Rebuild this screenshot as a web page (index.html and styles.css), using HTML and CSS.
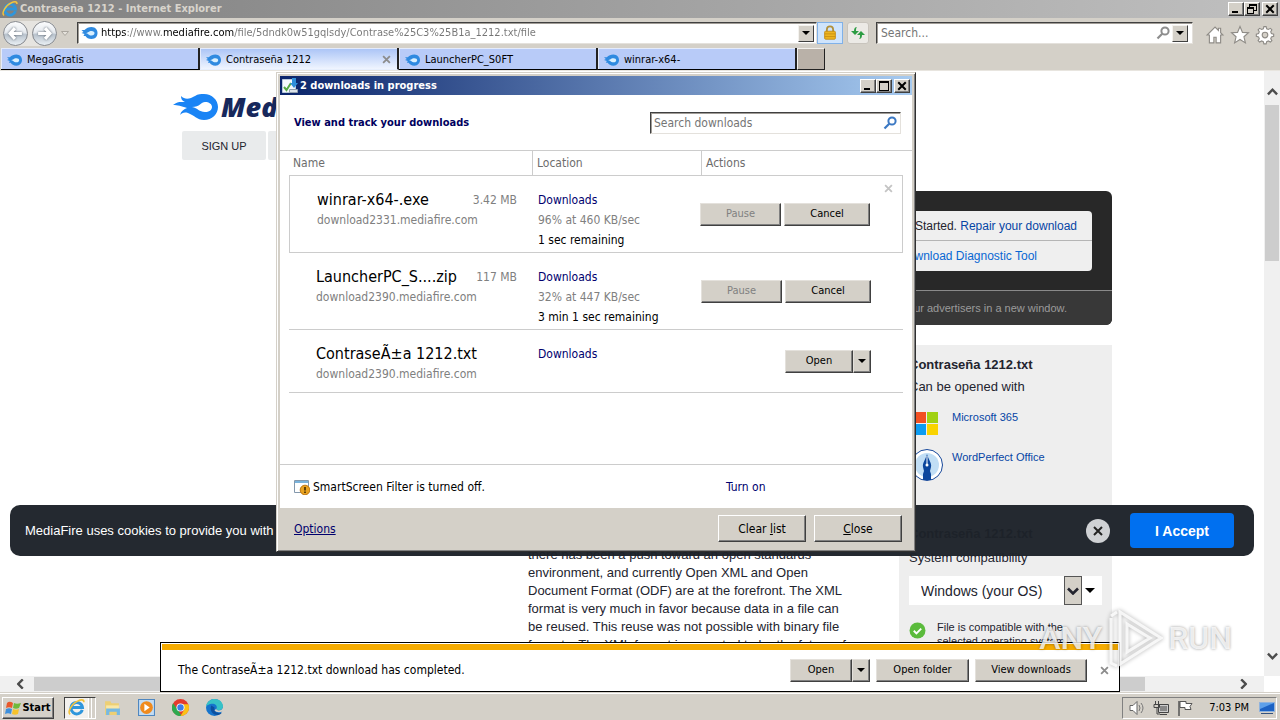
FILE: index.html
```html
<!DOCTYPE html>
<html lang="en">
<head>
<meta charset="utf-8">
<title>Contraseña 1212 - Internet Explorer</title>
<link rel="stylesheet" href="styles.css">
</head>
<body>
<svg class="defs" aria-hidden="true">
  <symbol id="flame" viewBox="0 0 46 26">
    <path fill="#1a84f5" fill-rule="evenodd" d="M0 11C5 7 8 8 12 8C9 7 8 5 8 2C12 6 17 5 22 2C25 0 28 0 31 0C39 0 45 6 45 13C45 20 39 26 31 26C24 26 21 21 15 19C11 18 9 19 7 21C8 17 11 15 14 14C8 12 5 11 0 11ZM19 13C25 14 26 18 32 18C36 18 39 16 39 13C39 10 36 8 32 8C28 8 27 13 19 13Z"/>
  </symbol>
  <symbol id="favicon" viewBox="0 0 16 12">
    <path fill="#2f8ae0" d="M0 3h3C5 1 7 0 10 0c4 0 6 3 6 6s-2 6-6 6c-3 0-5-1-6-3H2l1-2-3-1 2-1z"/>
    <path fill="#d9f0ff" d="M4 6c3 0 3-2 6-2 2 0 3 1 3 2.200S12 8.500 10 8.500C7 8.500 7 6.500 4 6z"/>
  </symbol>
  <symbol id="ie" viewBox="0 0 16 16">
    <path d="M13.4 10.2A5.4 5.4 0 1 1 13.6 8H4" fill="none" stroke="#2f96dc" stroke-width="2.8"/>
    <path d="M2 14.500C-1 12 4 4 9 2C12 .500 15 0 15 3" fill="none" stroke="#f3c33c" stroke-width="1.500"/>
  </symbol>
  <symbol id="arrow" viewBox="0 0 8 4"><path d="M0 0h8L4 4z"/></symbol>
  <symbol id="cross" viewBox="0 0 8 8"><path d="M1 1l6 6M7 1L1 7" fill="none" stroke="currentColor" stroke-width="1.600"/></symbol>
  <symbol id="lens" viewBox="0 0 14 14"><circle cx="9" cy="5" r="3.600" fill="none" stroke="currentColor" stroke-width="2"/><path d="M6.200 7.800L1.500 12.500" stroke="currentColor" stroke-width="2.200"/></symbol>
  <symbol id="chev" viewBox="0 0 12 8"><path d="M1 1.500l5 5 5-5" fill="none" stroke="currentColor" stroke-width="2.600"/></symbol>
  <symbol id="min" viewBox="0 0 10 10"><path d="M1 7h6v2H1z"/></symbol>
  <symbol id="max" viewBox="0 0 10 10"><path d="M0 0h10v10H0zM1 2v7h8V2z" fill-rule="evenodd"/></symbol>
  <symbol id="restore" viewBox="0 0 10 10"><path fill-rule="evenodd" d="M2 0h8v7H7v3H0V3h2zM3 2v1h4v3h2V2zM1 5v4h5V5z"/></symbol>
</svg>

<header class="titlebar">
  <svg class="i16"><use href="#ie"/></svg>
  <h1 class="titlebar-text">Contraseña 1212 - Internet Explorer</h1>
  <div class="winbtns">
    <button class="winbtn" aria-label="Minimize"><svg><use href="#min"/></svg></button>
    <button class="winbtn" aria-label="Restore"><svg><use href="#restore"/></svg></button>
    <button class="winbtn winbtn-close" aria-label="Close window"><svg><use href="#cross"/></svg></button>
  </div>
</header>

<div class="navbar">
  <div class="history">
    <button class="round" aria-label="Back"><svg viewBox="0 0 14 12"><path d="M6.500 1L2 6l4.500 5M2 6h11"/></svg></button>
    <button class="round" aria-label="Forward"><svg viewBox="0 0 14 12"><path d="M7.500 1L12 6l-4.500 5M12 6H1"/></svg></button>
  </div>
  <button class="recent" aria-label="Recent pages"><svg viewBox="0 0 8 5"><path d="M.500.500h7L4 4.500z"/></svg></button>
  <div class="address sunken">
    <svg class="favicon"><use href="#favicon"/></svg>
    <input class="address-input" aria-label="Address" value="https://www.mediafire.com/file/5dndk0w51gqlsdy/Contrase%25C3%25B1a_1212.txt/file">
    <button class="combo" aria-label="Show addresses"><svg><use href="#arrow"/></svg></button>
  </div>
  <button class="tool tool-lock" aria-label="Security report"><svg viewBox="0 0 14 18"><path d="M3.500 9V5a3.500 3.500 0 0 1 7 0v4" fill="none" stroke="#b1903b" stroke-width="2"/><rect x="1" y="7" width="12" height="9" rx="1" fill="#eeb51f" stroke="#c28a12"/><path d="M1 10h12M1 13h12" stroke="#c98f12"/></svg></button>
  <button class="tool" aria-label="Refresh"><svg viewBox="0 0 14 14"><path fill="#2c9c43" d="M6 1C4 1 3 2.500 3 5H0l4 4 4-4H5C5 3 5 2 6 1zM8 13c2 0 3-1.500 3-4h3l-4-4-4 4h3c0 2 0 3-1 4z"/></svg></button>
  <div class="search sunken">
    <input class="search-input" aria-label="Search" placeholder="Search...">
    <svg class="lens lens-grey"><use href="#lens"/></svg>
    <button class="combo" aria-label="Search options"><svg><use href="#arrow"/></svg></button>
  </div>
  <div class="navicons">
    <button class="navicon" aria-label="Home"><svg viewBox="0 0 16 16"><path d="M8 1L1 8h2v7h4v-5h2v5h4V8h2l-2-2V2h-2v2z"/></svg></button>
    <button class="navicon" aria-label="Favorites"><svg viewBox="0 0 16 16"><path d="M8 .500l2.200 5.200 5.300.300-4 3.600 1.300 5.400L8 12l-4.800 3 1.300-5.400-4-3.600 5.300-.300z"/></svg></button>
    <button class="navicon" aria-label="Tools"><svg viewBox="0 0 16 16"><path fill-rule="evenodd" d="M7 .500h2l.500 2 1.500.600 1.800-1 1.300 1.300-1 1.800.600 1.500 2 .500v2l-2 .500-.600 1.500 1 1.800-1.300 1.300-1.800-1-1.500.600-.500 2H7l-.500-2-1.500-.600-1.800 1-1.300-1.300 1-1.800-.600-1.500-2-.500v-2l2-.500.600-1.500-1-1.800 1.300-1.300 1.800 1 1.500-.600zM8 5.500a2.500 2.500 0 1 0 0 5 2.500 2.500 0 0 0 0-5z"/></svg></button>
  </div>
</div>

<nav class="tabs" aria-label="Tabs">
  <a class="tab" href="#"><svg class="favicon"><use href="#favicon"/></svg>MegaGratis</a>
  <div class="tab tab-active"><svg class="favicon"><use href="#favicon"/></svg><a class="tab-link" href="#">Contraseña 1212</a><button class="x" aria-label="Close tab"><svg><use href="#cross"/></svg></button></div>
  <a class="tab" href="#"><svg class="favicon"><use href="#favicon"/></svg>LauncherPC_S0FT</a>
  <a class="tab" href="#"><svg class="favicon"><use href="#favicon"/></svg>winrar-x64-</a>
  <button class="newtab" aria-label="New tab"></button>
</nav>

<main class="view">
  <div class="page">
    <div class="site-head">
      <a class="logo" href="#" aria-label="MediaFire"><svg class="logo-mark"><use href="#flame"/></svg><span>MediaFire</span></a>
      <div class="site-nav"><a href="#">SIGN UP</a><a href="#">LOG IN</a></div>
    </div>
    <section class="promo">
      <div class="promo-list">
        <p>Download not Started. <a href="#">Repair your download</a></p>
        <p><a class="bright" href="#">Use the Download Diagnostic Tool</a></p>
      </div>
      <p class="promo-note">Downloads open our advertisers in a new window.</p>
    </section>
    <div class="columns">
      <p class="article">there has been a push toward an open standards environment, and currently Open XML and Open Document Format (ODF) are at the forefront. The XML format is very much in favor because data in a file can be reused. This reuse was not possible with binary file formats. The XML format is expected to be the future of</p>
      <aside class="side">
        <h2>Contraseña 1212.txt</h2>
        <p class="sub">Can be opened with</p>
        <ul class="apps">
          <li><svg class="app-ms" viewBox="0 0 24 24"><path fill="#f25022" d="M0 0h11v11H0z"/><path fill="#a1d113" d="M12 0h11v11H12z"/><path fill="#0c9cf2" d="M0 12h11v11H0z"/><path fill="#f9d300" d="M12 12h11v11H12z"/></svg><a href="#">Microsoft 365</a></li>
          <li><svg class="app-wp" viewBox="0 0 32 32"><circle cx="16" cy="16" r="15.500" fill="#fff" stroke="#17489a"/><circle cx="16" cy="16" r="12" fill="#c1def5"/><path fill="#0b469d" d="M16 5c1 5 5 9 4 13l-1 4 1 3v6h-8v-6l1-3-1-4c-1-4 3-8 4-13z"/><path d="M16 7v8" stroke="#fff"/><circle cx="16" cy="16" r="1.500" fill="#fff"/></svg><a href="#">WordPerfect Office</a></li>
        </ul>
        <h2>Contraseña 1212.txt</h2>
        <label class="sub" for="os">System compatibility</label>
        <div class="os">
          <select id="os"><option>Windows (your OS)</option></select>
          <span class="os-arrow"><svg><use href="#chev"/></svg></span>
          <svg class="os-caret"><use href="#arrow"/></svg>
        </div>
        <p class="compat"><svg viewBox="0 0 16 16"><circle cx="8" cy="8" r="7.500" fill="#5bbb3c"/><path d="M4.500 8.200l2.500 2.500 4.500-4.500" fill="none" stroke="#fff" stroke-width="1.800"/></svg><span>File is compatible with the selected operating system.</span></p>
      </aside>
    </div>
  </div>
  <div class="vscroll"><svg class="up"><use href="#chev"/></svg><div class="vthumb"></div><svg class="down"><use href="#chev"/></svg></div>
  <div class="hscroll"><svg class="left"><use href="#chev"/></svg><div class="hthumb"></div><svg class="right"><use href="#chev"/></svg></div>
  <div class="cookie">
    <p>MediaFire uses cookies to provide you with</p>
    <button class="cookie-x" aria-label="Dismiss"><svg viewBox="0 0 10 10"><path d="M1 1l8 8M9 1L1 9"/></svg></button>
    <button class="accept">I Accept</button>
  </div>
</main>

<section class="dialog" aria-label="Downloads">
  <header class="dlg-title">
    <svg class="i16" viewBox="0 0 16 16"><path fill="#f5f9fd" stroke="#b9c9dc" d="M.500 1.500h13v13H.500z"/><path d="M2 9l2.500 3L9 5" fill="none" stroke="#58ab46" stroke-width="2"/><path fill="#2f8fda" d="M10 0h4v5h2l-4 5-4-5h2z"/><path fill="#dce3ea" stroke="#93a1b0" d="M7.500 11.500h8v3h-8z"/></svg>
    <h2 class="titlebar-text">2 downloads in progress</h2>
    <div class="winbtns">
      <button class="winbtn" aria-label="Minimize"><svg><use href="#min"/></svg></button>
      <button class="winbtn" aria-label="Maximize"><svg><use href="#max"/></svg></button>
      <button class="winbtn winbtn-close" aria-label="Close downloads"><svg><use href="#cross"/></svg></button>
    </div>
  </header>
  <div class="dlg-body">
    <div class="dlg-head">
      <h3>View and track your downloads</h3>
      <div class="dlg-search sunken"><input aria-label="Search downloads" placeholder="Search downloads"><svg class="lens lens-blue"><use href="#lens"/></svg></div>
    </div>
    <table class="list">
      <thead><tr><th class="c-name">Name</th><th class="c-loc">Location</th><th>Actions</th></tr></thead>
      <tbody>
        <tr class="selected">
          <td class="name"><div class="file"><strong>winrar-x64-.exe</strong><span>3.42 MB</span></div><div class="grey">download2331.mediafire.com</div></td>
          <td class="loc"><a href="#">Downloads</a><div class="grey">96% at 460 KB/sec</div><div>1 sec remaining</div></td>
          <td class="act"><div class="acts"><button class="btn b-pause" disabled>Pause</button><button class="btn b-cancel">Cancel</button></div><button class="x row-x" aria-label="Remove"><svg><use href="#cross"/></svg></button></td>
        </tr>
        <tr>
          <td class="name"><div class="file"><strong>LauncherPC_S....zip</strong><span>117 MB</span></div><div class="grey">download2390.mediafire.com</div></td>
          <td class="loc"><a href="#">Downloads</a><div class="grey">32% at 447 KB/sec</div><div>3 min 1 sec remaining</div></td>
          <td class="act"><div class="acts"><button class="btn b-pause" disabled>Pause</button><button class="btn b-cancel">Cancel</button></div></td>
        </tr>
        <tr class="short">
          <td class="name"><div class="file"><strong>ContraseÃ±a 1212.txt</strong></div><div class="grey">download2390.mediafire.com</div></td>
          <td class="loc"><a href="#">Downloads</a></td>
          <td class="act"><div class="acts"><div class="split"><button class="btn b-open">Open</button><button class="btn b-drop" aria-label="Open options"><svg><use href="#arrow"/></svg></button></div></div></td>
        </tr>
      </tbody>
    </table>
    <div class="smart">
      <p><svg class="i16" viewBox="0 0 16 16"><path fill="#fff" stroke="#8498ac" d="M.500 1.500h14v12H.500z"/><path stroke="#79b3dc" stroke-width="2" d="M1 3h13"/><circle cx="11" cy="11" r="4.800" fill="#e9a321" stroke="#bd7610"/><path d="M11 8v3.500M11 12.500v1.500" stroke="#402800" stroke-width="1.600"/></svg>SmartScreen Filter is turned off.</p>
      <a href="#">Turn on</a>
    </div>
  </div>
  <footer class="dlg-foot">
    <a href="#">Options</a>
    <button class="cbtn">Clear <u>l</u>ist</button>
    <button class="cbtn"><u>C</u>lose</button>
  </footer>
</section>

<section class="notice" aria-label="Download notification">
  <div class="notice-bar"></div>
  <div class="notice-row">
    <p>The ContraseÃ±a 1212.txt download has completed.</p>
    <div class="split"><button class="btn n-open">Open</button><button class="btn b-drop" aria-label="Open options"><svg><use href="#arrow"/></svg></button></div>
    <button class="btn n-folder">Open folder</button>
    <button class="btn n-view">View downloads</button>
    <button class="x" aria-label="Dismiss notification"><svg><use href="#cross"/></svg></button>
  </div>
</section>

<div class="watermark"><span>ANY</span><svg viewBox="0 0 56 60"><path d="M4 10v45l6 3M10 4L4 8M13 4v52l41-26zM20 16v28l23-14z"/></svg><span>RUN</span></div>

<footer class="taskbar">
  <button class="start"><svg viewBox="0 0 16 16"><path fill="#e8582b" d="M2 3c2-2 4-1 6 0L7 8C5 7 3 7 1 8z"/><path fill="#6fb93a" d="M9 3c2 1 4 1 7 0l-2 5c-2 1-4 1-6 0z"/><path fill="#3d8fdc" d="M1 9c2-1 4-1 6 0l-1 5c-2-1-4-1-6 0z"/><path fill="#f6c22b" d="M8 9c2 1 4 1 6 0l-1 5c-2 1-4 1-6 0z"/></svg>Start</button>
  <button class="task task-ie" aria-label="Internet Explorer"><svg><use href="#ie"/></svg></button>
  <button class="task" aria-label="Explorer"><svg viewBox="0 0 16 16"><path fill="#edcf74" d="M1 2h5l1 2h7v11H1z"/><path fill="#f9e7a6" d="M2 6h12v5H2z"/><path fill="#76b9e3" d="M2 15V9h13v6h-3v-3H5v3z"/></svg></button>
  <button class="task" aria-label="Media Player"><svg viewBox="0 0 16 16"><path fill="#c3dcf3" stroke="#4f87c0" d="M.500.500h15v15H.500z"/><circle cx="8" cy="8" r="6" fill="#f08a1d"/><path fill="#fff" d="M6 4.500v7l5-3.500z"/></svg></button>
  <button class="task" aria-label="Chrome"><svg viewBox="0 0 16 16"><circle cx="8" cy="8" r="8" fill="#e33b2e"/><path fill="#2da94f" d="M1 4l4.500 6L9 16A8 8 0 0 1 1 4z"/><path fill="#fbc116" d="M8 5h7.400A8 8 0 0 1 8 16l3.500-6z"/><circle cx="8" cy="8" r="3.800" fill="#fff"/><circle cx="8" cy="8" r="3" fill="#3d7de8"/></svg></button>
  <button class="task" aria-label="Edge"><svg viewBox="0 0 16 16"><circle cx="8" cy="8" r="8" fill="#1674cc"/><path fill="#37c2c6" d="M0 7C1 2 5 0 8 0c5 0 8 3.500 8 7 0 2-2 3.500-4 3.500-1.500 0-2.500-.500-2-1.500C11 6 8 4 5 4.500 2.500 5 1 6 0 7z"/><path fill="#0d4f9e" d="M5 6c-2 4 1 9 6 9 2 0 3-1 4-2-3 1-8 0-7-5z"/><path fill="#d4d0c8" d="M10 9c-1 1 .500 1.800 2 1.800 2 0 3.500-1 4-2.800v3.500c-3 1.500-7 1-8-1z"/></svg></button>
  <div class="tray">
    <svg viewBox="0 0 16 16"><path fill="#fff" stroke="#666" d="M1 5.500h3l4-4v13l-4-4H1z"/><path d="M10 5q2 3 0 6M12 3q4 5 0 10" fill="none" stroke="#777"/></svg>
    <svg viewBox="0 0 16 16"><path fill="#ccc" stroke="#444" d="M5.500 4.500h10v8h-10z"/><path fill="#888" d="M7 6h7v5H7z"/><path d="M7 14.500h7M2.500 1v3M5.500 1v3M1 4.500h5.500v3H1zM4 8v6h3" fill="none" stroke="#444"/></svg>
    <svg viewBox="0 0 16 16"><path d="M2 1v15" stroke="#555" stroke-width="1.500"/><path fill="#fff" stroke="#555" d="M3 1.500h6v2h6l-2 3 1 3H8v-2H3z"/></svg>
    <time>7:03 PM</time>
    <svg class="desk" viewBox="0 0 16 14"><path fill="#1c62c4" stroke="#8fb3de" d="M.500 1.500h15v9H.500z"/><path fill="#5da0ea" d="M1 2h14L1 8z"/><path fill="#33527e" d="M2 12h12v1H2z"/></svg>
  </div>
</footer>
</body>
</html>
```

FILE: styles.css
```css
* { box-sizing: border-box; }
html, body { height: 100%; margin: 0; }
body {
  display: flex;
  flex-direction: column;
  position: relative;
  overflow: hidden;
  background: #d4d0c8;
  color: #000;
  font: 12px/16px "DejaVu Sans Condensed", "DejaVu Sans", sans-serif;
}
h1, h2, h3, p, ul { margin: 0; padding: 0; }
ul { list-style: none; }
button, input, select { font: inherit; color: inherit; padding: 0; border: 0; border-radius: 0; background: none; }
input { min-width: 0; outline: 0; }
input::placeholder { color: #757575; opacity: 1; }
a { color: #00006e; text-decoration: none; }
button { display: flex; align-items: center; justify-content: center; flex: none; }
svg { display: block; flex: none; }
.defs { position: absolute; width: 0; height: 0; }
.i16 { width: 16px; height: 16px; }

/* title bars */
.titlebar { display: flex; align-items: center; gap: 2px; height: 18px; padding: 0 2px; background: linear-gradient(90deg, #808080, #c0c0c0); color: #d8d4cc; }
.titlebar-text { flex: 1; font-size: 11px; line-height: 16px; font-weight: bold; white-space: nowrap; }
.winbtns { display: flex; }
.winbtn { width: 16px; height: 14px; color: #000; background: #d4d0c8; border: 1px solid; border-color: #fff #404040 #404040 #fff; box-shadow: inset -1px -1px #808080; }
.winbtn svg { width: 10px; height: 10px; }
.winbtn-close { margin-left: 2px; }

/* address row */
.navbar { display: flex; align-items: center; height: 30px; padding-left: 3px; padding-right: 6px; }
.history { display: flex; gap: 4px; background: #e6e4e0; border-radius: 14px; }
.round { width: 25px; height: 25px; border-radius: 50%; border: 1px solid #85888d; background: linear-gradient(#fbfcfd, #e6eaef 45%, #b9c3cd 55%, #e9eff4); }
.round svg { width: 15px; height: 13px; fill: none; stroke: #fff; stroke-width: 3; filter: drop-shadow(0 0 1px #59636e); }
.recent { width: 16px; margin-right: 4px; }
.recent svg { width: 8px; height: 5px; fill: #e5e2dc; stroke: #aaa69f; }
.sunken { display: flex; align-items: center; background: #fff; border: 1px solid; border-color: #404040 #e4e1dc #e4e1dc #404040; box-shadow: inset 1px 1px #a09c96; }
.address { flex: 1 1 740px; height: 22px; padding: 1px 2px; }
.favicon { width: 15px; height: 12px; }
.address .favicon { width: 17px; margin: 0 3px 0 1px; }
.address-input {
  flex: 1;
  font-size: 11px;
  background: linear-gradient(90deg, #000 26px, #757575 26px, #757575 61px, #000 61px, #000 133px, #757575 133px);
  background-clip: text;
  -webkit-background-clip: text;
  -webkit-text-fill-color: transparent;
}
.combo { width: 16px; height: 17px; background: #d4d0c8; border: 1px solid; border-color: #f4f2ee #404040 #404040 #f4f2ee; }
.combo svg, .b-drop svg { width: 8px; height: 4px; }
.tool { width: 22px; height: 22px; margin-left: 4px; border: 1px solid #c8c4bd; background: #eceae6; border-radius: 3px; }
.tool svg { width: 14px; height: 16px; }
.tool-lock { width: 26px; margin-left: 0; border-color: #80b1e8; background: #cfe4fc; border-radius: 0; }
.search { flex: 0 1 317px; height: 22px; margin-left: 7px; padding: 1px 4px; }
.search-input { flex: 1; }
.lens { width: 14px; height: 14px; }
.lens-grey { color: #8d8d8d; margin-right: 2px; }
.lens-blue { color: #3b78c3; }
.navicons { display: flex; gap: 7px; margin-left: 13px; padding-top: 4px; }
.navicon svg { width: 18px; height: 18px; fill: #fff; stroke: #8e8b86; overflow: visible; }

/* tabs */
.tabs { display: flex; height: 23px; padding-left: 1px; border-bottom: 1px solid #e8e5df; }
.tab { flex: 0 1 199px; display: flex; align-items: center; gap: 5px; padding: 2px 6px 0; font-size: 11px; color: #000; background: #b8cbf8; border-right: 2px solid #222; border-bottom: 1px solid #000; box-shadow: inset 1px 1px #e4ebfb; white-space: nowrap; }
.tab-active { background: linear-gradient(#a9c3f6, #f0f5ff); border-bottom-color: #e7effd; }
.tab-link { flex: 1; color: #000; }
.newtab { width: 28px; background: #b9b1a8; border: 1px solid; border-color: #f2f0ec #222 #222 #f2f0ec; }
.x { color: #8c8c8c; }
.x svg { width: 9px; height: 9px; }

/* browser view */
.view { position: relative; flex: 1; min-height: 0; display: grid; grid-template: minmax(0, 1fr) 16px / minmax(0, 1fr) 16px; background: #fff; }
.page { overflow: hidden; padding: 21px 152px 0 182px; font-family: "Liberation Sans", Arial, sans-serif; font-size: 13px; color: #23242e; }
.page a { color: #0645a5; }
.logo { display: flex; align-items: center; gap: 2px; height: 30px; margin-left: -9px; }
.page .logo { color: #17285c; font: italic 800 27px/30px "Open Sans", sans-serif; }
.logo-mark { width: 46px; height: 26px; }
.site-nav { display: flex; gap: 2px; margin-top: 9px; }
.site-nav a { width: 84px; height: 29px; line-height: 30px; text-align: center; font-size: 11px; color: #23242e; background: #e9ebec; border-radius: 2px; }
.promo { width: 584px; margin: 31px 0 0 auto; padding-top: 20px; background: #282828; border-radius: 6px; overflow: hidden; text-align: right; white-space: nowrap; }
.promo-list { margin: 0 20px 19px; background: #efefef; border-radius: 4px; line-height: 30px; font-size: 12px; }
.promo-list p { height: 29px; padding-right: 15px; }
.promo-list p + p { height: 31px; border-top: 1px solid #b5b5b5; padding-right: 55px; }
.page .bright { color: #0967d3; }
.promo-note { padding-right: 45px; line-height: 34px; font-size: 11px; color: #9b9b9b; background: #383838; border-top: 1px solid #8a8a8a; }
.columns { display: flex; justify-content: flex-end; align-items: flex-start; gap: 50px; margin-top: 20px; }
.article { width: 321px; padding-top: 201px; line-height: 18px; }
.side { width: 213px; min-height: 400px; padding: 9px 10px; background: #eee; }
.side h2 { font-size: 13px; line-height: 22px; }
.side .sub { display: block; line-height: 22px; font-size: 13px; }
.apps { display: grid; gap: 8px; margin: 11px 0 42px; font-size: 11px; line-height: 16px; }
.apps li { display: flex; height: 32px; align-items: flex-start; gap: 10px; }
.apps .app-wp { width: 32px; height: 32px; margin: 0 -1px 0 2px; }
.apps .app-ms { width: 24px; height: 24px; margin: 3px 3px 0 6px; }
.side label { padding-top: 2px; }
.os { display: flex; align-items: center; height: 29px; margin-top: 7px; padding-right: 7px; background: #fff; }
.os select { flex: 1; height: 29px; padding-left: 12px; appearance: none; font-size: 14px; }
.os-arrow { display: grid; place-items: center; width: 18px; height: 29px; background: #d4d0c8; border: 1px solid #555; }
.os-arrow svg { width: 12px; height: 8px; }
.os-caret { width: 10px; height: 5px; margin-left: 3px; }
.compat { display: flex; gap: 11px; margin-top: 15px; font-size: 11px; line-height: 14px; }
.compat svg { width: 17px; height: 17px; margin-top: 2px; }
.vscroll { display: flex; flex-direction: column; align-items: center; background: #f0f0f0; color: #4c4c4c; padding: 17px 0 16px; }
.vscroll svg, .hscroll svg { width: 11px; height: 8px; }
.up { transform: rotate(180deg); }
.vthumb { width: 14px; height: 156px; margin: 9px 0 auto; background: #cdcdcd; }
.hscroll { display: flex; align-items: center; padding: 0 15px; background: #f0f0f0; color: #4c4c4c; }
.left { transform: rotate(90deg); }
.right { transform: rotate(270deg); }
.hthumb { flex: 0 1 1111px; height: 14px; margin: 0 auto 0 8px; background: #cdcdcd; }
.cookie { position: absolute; left: 10px; right: 26px; bottom: 136px; display: flex; align-items: center; padding: 8px 20px 8px 15px; background: rgba(29, 34, 41, .97); border-radius: 10px; color: #fff; font-family: "Liberation Sans", Arial, sans-serif; font-size: 13px; }
.cookie p { flex: 1; }
.cookie-x { width: 24px; height: 24px; border-radius: 50%; background: #cfd1d4; }
.cookie-x svg { width: 10px; height: 10px; fill: none; stroke: #222; stroke-width: 2; }
.accept { width: 104px; height: 35px; margin-left: 20px; background: #0070f0; border-radius: 4px; font-size: 14px; font-weight: bold; }

/* downloads window */
.dialog { position: absolute; left: 276px; top: 72px; width: 640px; padding: 2px; background: #d4d0c8; border: 1px solid; border-color: #d4d0c8 #303030 #303030 #d4d0c8; box-shadow: inset 1px 1px #fff, inset -1px -1px #808080; }
.dlg-title { display: flex; align-items: center; gap: 2px; height: 19px; margin: 1px 1px 0; padding: 0 2px; background: linear-gradient(90deg, #0a246a, #a6caf0); color: #fff; }
.dlg-body { margin: 0 1px; background: #fff; }
.dlg-head { display: flex; align-items: center; justify-content: space-between; height: 55px; padding: 0 11px 0 14px; }
.dlg-head h3 { font-size: 11px; color: #00005e; }
.dlg-search { width: 251px; height: 22px; padding: 0 3px; color: #757575; }
.dlg-search input { flex: 1; }
.list { width: 100%; padding: 0 9px; border-top: 1px solid #ccc; border-spacing: 0; table-layout: fixed; }
.list th { height: 24px; padding: 0 4px; text-align: left; font-weight: normal; color: #6d6d6d; }
.list th + th { border-left: 1px solid #ccc; }
.c-name { width: 243px; }
.c-loc { width: 169px; }
.list td { height: 77px; padding: 14px 0 2px; border-bottom: 1px solid #ccc; vertical-align: top; line-height: 20px; }
.list .selected td { height: 78px; border-top: 1px solid #ccc; }
.list .selected td:first-child { border-left: 1px solid #ccc; }
.list .selected td:last-child { border-right: 1px solid #ccc; }
.list .short td { height: 63px; }
.list .name { padding-left: 27px; padding-right: 15px; }
.list .loc { padding-left: 6px; }
.list .act { position: relative; padding: 0 32px 0 0; vertical-align: middle; }
.file { display: flex; justify-content: space-between; }
.file strong { font-size: 16px; font-weight: normal; }
.file span, .grey { color: #808080; }
.acts { display: flex; justify-content: flex-end; gap: 3px; }
.row-x { position: absolute; top: 8px; right: 9px; color: #c4c4c4; }
.btn { height: 23px; font-size: 11px; color: #000; background: #d4d0c8; border: 1px solid; border-color: #e4e1dc #404040 #404040 #e4e1dc; box-shadow: inset -1px -1px #808080; }
.btn:disabled { color: #808080; }
.b-pause { width: 81px; }
.b-cancel { width: 86px; }
.b-open { width: 68px; }
.b-drop { width: 18px; }
.split { display: flex; }
.smart { display: grid; grid-template-columns: 432px 1fr; align-items: center; height: 44px; margin-top: 71px; padding: 0 14px; border-top: 1px solid #ccc; }
.smart p { display: flex; align-items: center; gap: 3px; }
.dlg-foot { display: flex; align-items: center; gap: 8px; height: 41px; padding: 0 11px 0 15px; }
.dlg-foot a { margin-right: auto; text-decoration: underline; }
.cbtn { display: block; width: 88px; height: 27px; background: #d4d0c8; border: 1px solid; border-color: #fff #404040 #404040 #fff; box-shadow: inset -1px -1px #808080; }

/* download notification */
.notice { position: absolute; left: 160px; right: 160px; bottom: 28px; padding: 1px; background: #fff; border: 1px solid #000; }
.notice-bar { height: 6px; background: #f5ab00; }
.notice-row { display: flex; align-items: center; height: 40px; padding: 0 9px 0 16px; }
.notice-row p { flex: 1; }
.n-open { width: 62px; }
.n-folder { width: 93px; margin-left: 6px; }
.n-view { width: 112px; margin: 0 13px 0 6px; }

.watermark { position: absolute; right: 48px; bottom: 52px; display: flex; align-items: center; gap: 5px; pointer-events: none; color: rgba(255, 255, 255, .8); font: 500 32px/60px Roboto, sans-serif; text-shadow: 0 0 3px rgba(0, 0, 0, .4); }
.watermark svg { width: 56px; height: 60px; fill: none; stroke: rgba(255, 255, 255, .8); stroke-width: 3; filter: drop-shadow(0 0 2px rgba(0, 0, 0, .4)); }

/* taskbar */
.taskbar { display: flex; align-items: center; gap: 10px; height: 28px; padding: 3px 3px 1px 2px; border-top: 1px solid #d4d0c8; box-shadow: inset 0 1px #fff; background: #d4d0c8; }
.start { gap: 1px; width: 52px; height: 22px; font-size: 11px; font-weight: bold; border: 1px solid; border-color: #fff #404040 #404040 #fff; box-shadow: inset -1px -1px #808080; }
.start svg { width: 16px; height: 16px; }
.task { width: 24px; height: 22px; }
.task svg { width: 17px; height: 17px; }
.task-ie { width: 32px; margin-right: -6px; padding-right: 8px; background: linear-gradient(90deg, #f3f1ee 23px, #fff 23px, #fff 24px, #d4d0c8 24px, #d4d0c8 26px, #fff 26px, #fff 27px, #d4d0c8 27px, #d4d0c8 30px, #fff 30px); border: 1px solid; border-color: #404040 #fff #fff #404040; }
.tray { display: flex; align-items: center; gap: 8px; height: 22px; margin-left: auto; padding: 0 1px 0 6px; font-size: 11px; border: 1px solid; border-color: #808080 #fff #fff #808080; }
.tray svg { width: 16px; height: 16px; }
.tray time { margin: 0 2px 0 8px; }
.tray .desk { height: 14px; }
```
